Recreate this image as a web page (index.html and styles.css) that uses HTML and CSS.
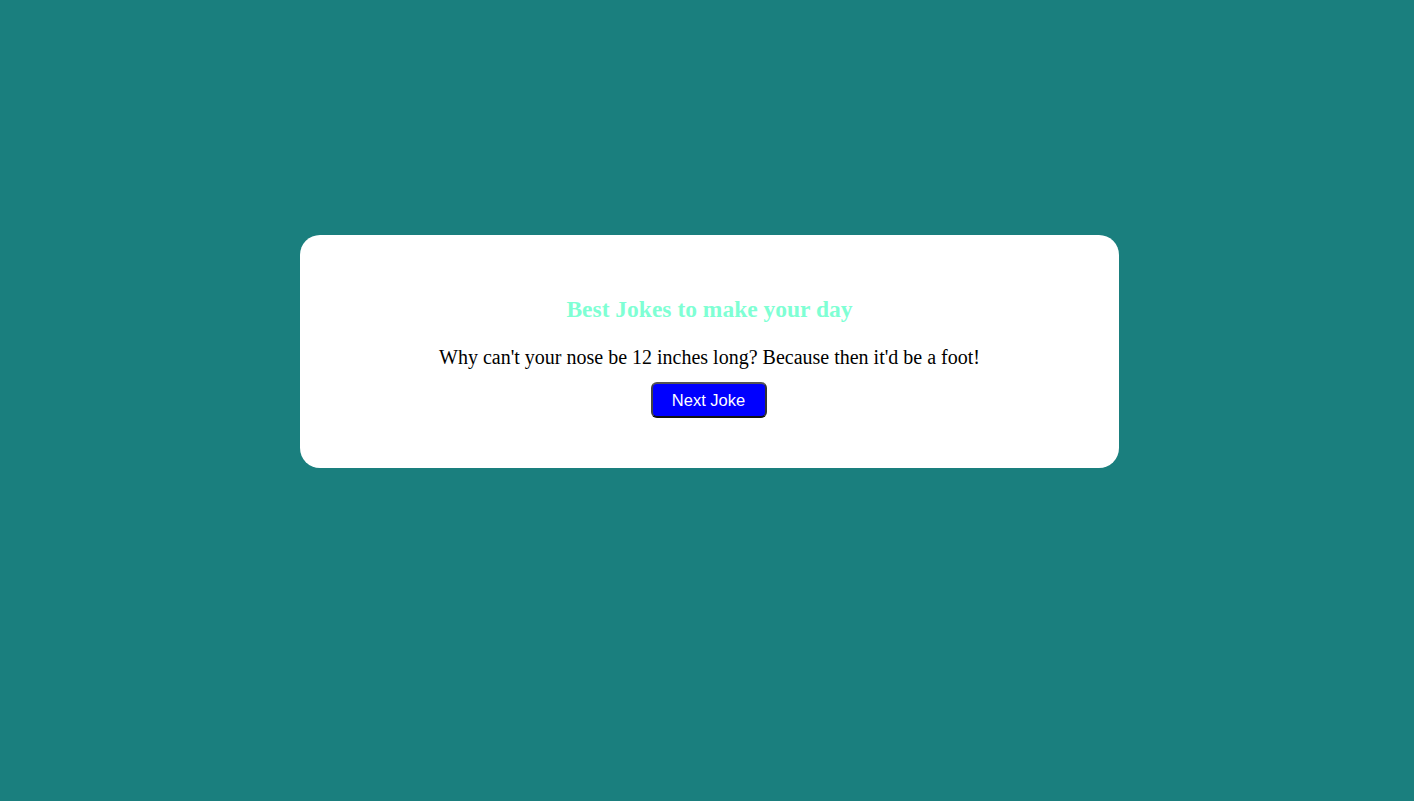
FILE: index.html
```html
<!DOCTYPE html>
<html>
<head>
<meta charset="utf-8">
<link rel="stylesheet" href="styles.css">
<title>Jokes</title>
</head>
<body>
<div class="card">
  <h3 class="title">Best Jokes to make your day</h3>
  <p class="joke">Why can't your nose be 12 inches long? Because then it'd be a foot!</p>
  <button class="btn">Next Joke</button>
</div>
</body>
</html>
```
FILE: styles.css
```css
html, body {
  margin: 0;
  height: 100%;
}
body {
  background: #1a7f7e;
  font-family: "Liberation Serif", "Times New Roman", serif;
  display: flex;
  justify-content: center;
  align-items: flex-start;
  padding-left: 5px;
  box-sizing: border-box;
}
.card {
  margin-top: 235px;
  width: 819px;
  height: 233px;
  box-sizing: border-box;
  background: #fff;
  border-radius: 20px;
  text-align: center;
  padding-top: 50px;
}
.title {
  color: #7fffd4;
  font-size: 23.5px;
  font-weight: bold;
  margin: 11px 0 0;
}
.joke {
  font-size: 20px;
  color: #000;
  margin: 23px 0 13px;
}
.btn {
  background: #0000ff;
  color: #fff;
  font-family: "Liberation Sans", Arial, sans-serif;
  font-size: 16.5px;
  width: 116px;
  height: 36px;
  margin-left: -2px;
  border: 2px solid;
  border-color: #555 #333 #111 #444;
  border-radius: 6px;
  padding: 0;
}
```
